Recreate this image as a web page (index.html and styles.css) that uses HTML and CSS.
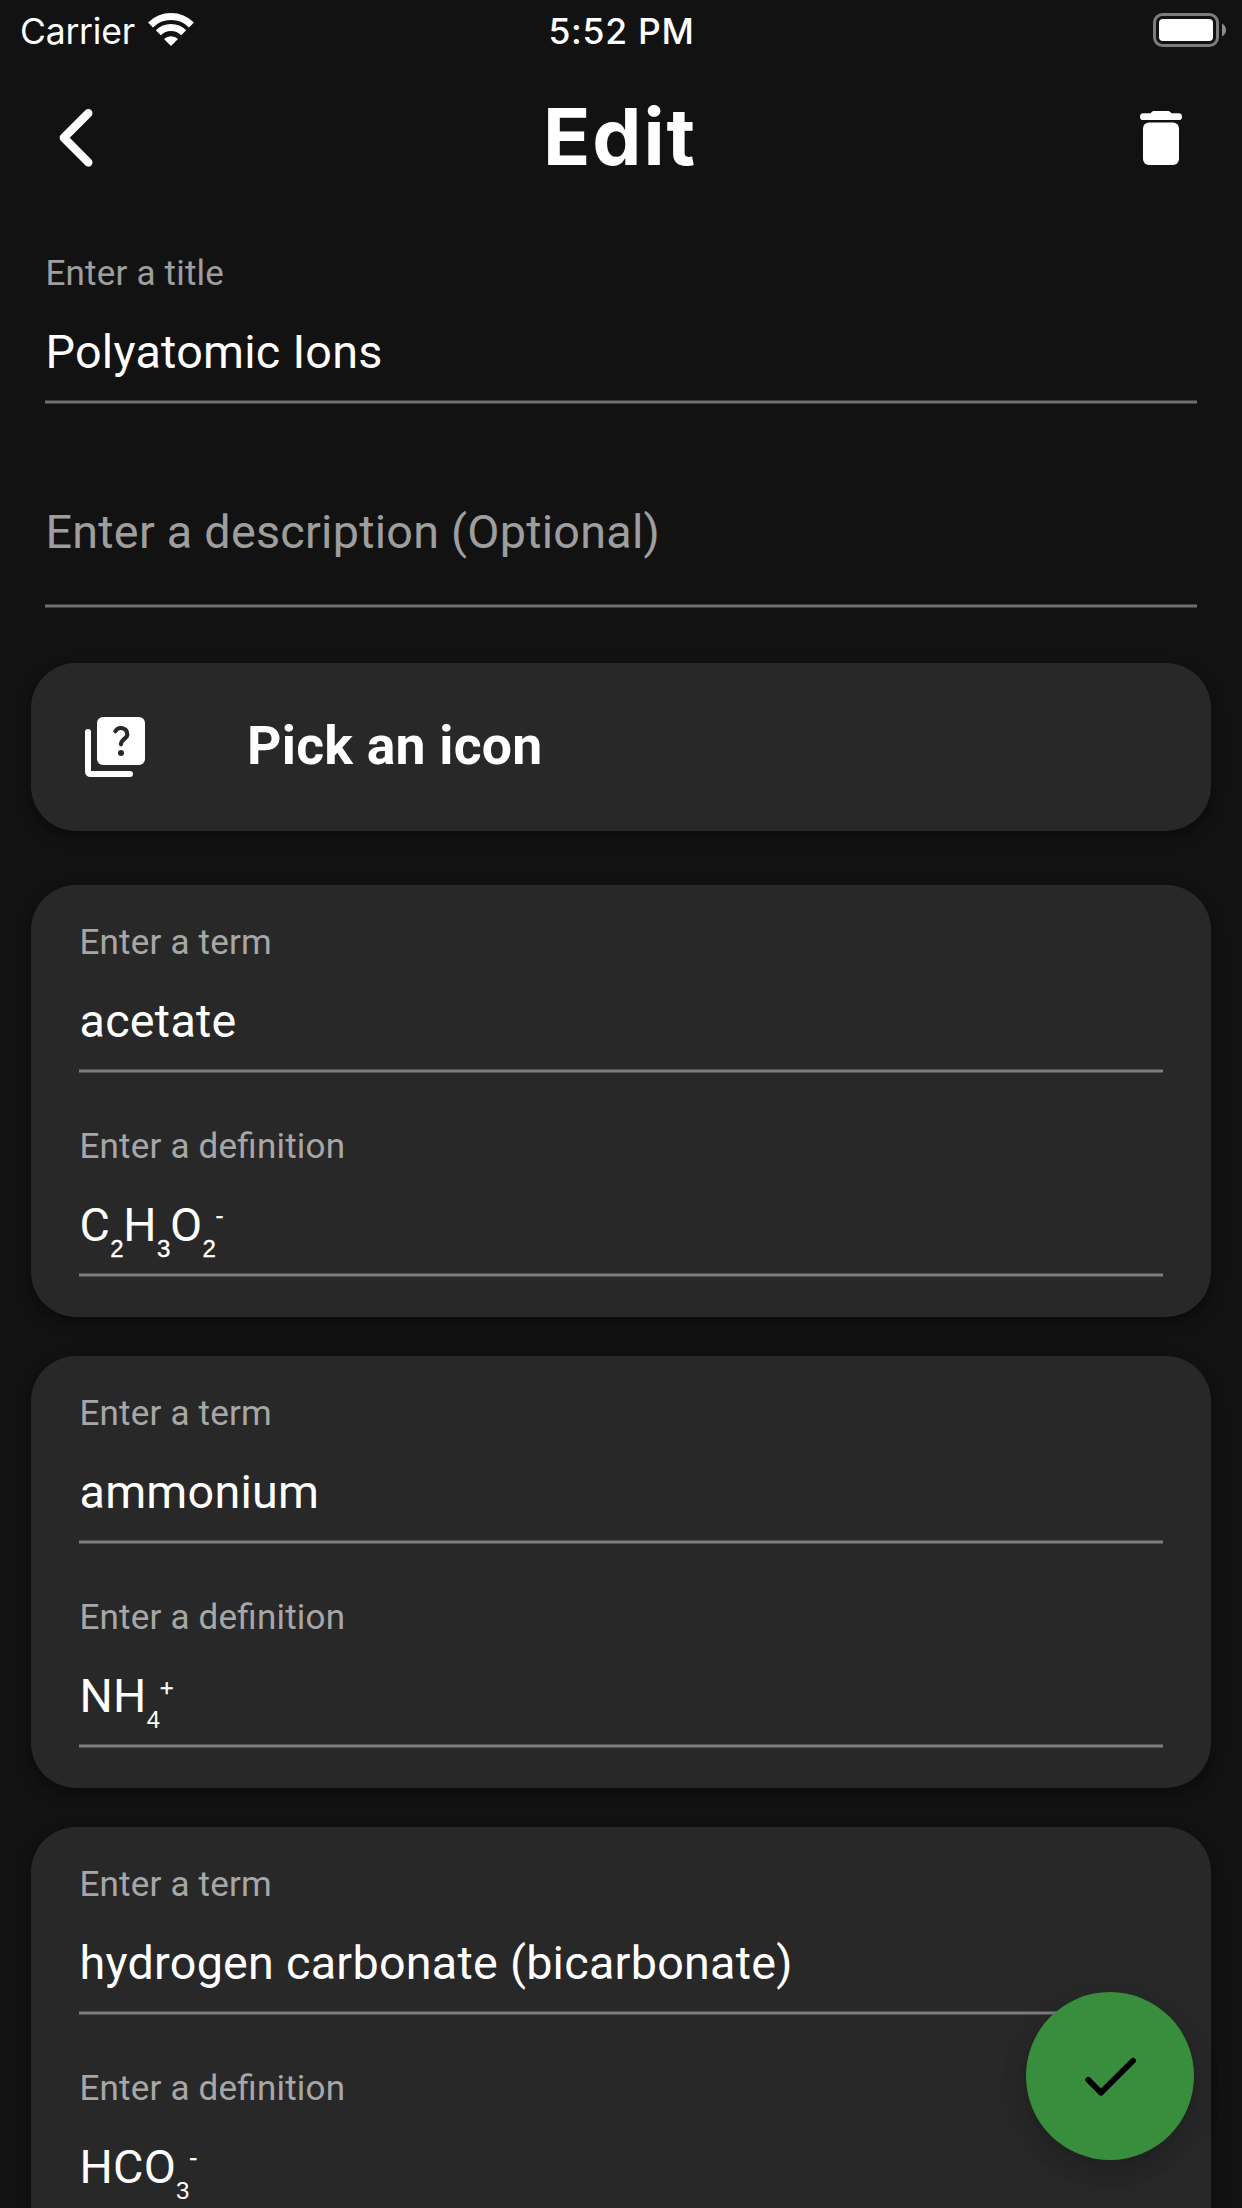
FILE: index.html
```html
<!DOCTYPE html>
<html lang="en">
<head>
<meta charset="utf-8">
<title>Edit</title>
<link rel="stylesheet" href="styles.css">
</head>
<body>
<div class="screen">
  <div class="status">
    <div class="status-left">
      <span class="carrier">Carrier</span>
      <svg class="wifi" width="46" height="34" viewBox="149 13 46 34" fill="none" stroke="#fff" stroke-width="7">
        <path d="M151.5 25A29 29 0 0 1 192.5 25"/>
        <path d="M159.3 32.8A18 18 0 0 1 184.7 32.8"/>
        <path d="M172 46L165 39A10 10 0 0 1 179 39Z" fill="#fff" stroke="none"/>
      </svg>
    </div>
    <span class="clock">5:52 PM</span>
    <svg class="battery" width="74" height="34" viewBox="1153 13 74 34">
      <rect x="1154.5" y="14.5" width="63" height="31" rx="8" fill="none" stroke="#7c7c7c" stroke-width="3"/>
      <rect x="1159" y="19" width="54" height="22" rx="4" fill="#fff"/>
      <path d="M1222 23.5C1227.3 26 1227.3 34 1222 36.5Z" fill="#8c8c8c"/>
    </svg>
  </div>
  <header class="header">
    <svg class="back" width="36" height="60" viewBox="58 108 36 60" fill="none" stroke="#fff" stroke-width="8.4" stroke-linecap="round" stroke-linejoin="round">
      <path d="M88.3 113.2L63.8 137.7L88.3 162.4"/>
    </svg>
    <h1 class="title">Edit</h1>
    <svg class="trash" width="42" height="54" viewBox="1140 111 42 54" fill="#fff">
      <path d="M1143.2 113.3H1150.5L1151.7 112Q1152.6 111 1154 111H1168Q1169.4 111 1170.3 112L1171.5 113.3H1178.8A3.2 3.35 0 0 1 1178.8 120H1143.2A3.2 3.35 0 0 1 1143.2 113.3Z"/>
      <rect x="1143" y="122.6" width="36" height="42.4" rx="6"/>
    </svg>
  </header>

  <main>
    <section class="details">
      <div class="field">
        <div class="label">Enter a title</div>
        <div class="value">Polyatomic Ions</div>
        <div class="line"></div>
      </div>
      <div class="field field-empty">
        <div class="value placeholder">Enter a description (Optional)</div>
        <div class="line"></div>
      </div>
    </section>

    <div class="card picker">
      <svg width="60" height="60" viewBox="85 717 60 60" fill="none" stroke-linecap="round" stroke-linejoin="round">
        <path d="M85 732A3 3 0 0 1 91 732V771H130A3 3 0 0 1 130 777H91Q85 777 85 771Z" fill="#fff"/>
        <rect x="97" y="717" width="48" height="48" rx="6" fill="#fff"/>
        <path d="M115.4 731.2A6.4 6.4 0 0 1 127.3 734.4C127.3 738.6 121 739.4 121 744.3" stroke="#282828" stroke-width="4.2"/>
        <circle cx="121" cy="753" r="3" fill="#282828"/>
      </svg>
      <span class="picker-text">Pick an icon</span>
    </div>

    <div class="terms">
      <article class="card term">
        <div class="field">
          <div class="label">Enter a term</div>
          <div class="value">acetate</div>
          <div class="line"></div>
        </div>
        <div class="field">
          <div class="label">Enter a definition</div>
          <div class="value strong-scripts">C<sub>2</sub>H<sub>3</sub>O<sub>2</sub><sup>-</sup></div>
          <div class="line"></div>
        </div>
      </article>
      <article class="card term">
        <div class="field">
          <div class="label">Enter a term</div>
          <div class="value">ammonium</div>
          <div class="line"></div>
        </div>
        <div class="field">
          <div class="label">Enter a definition</div>
          <div class="value">NH<sub>4</sub><sup class="plus">+</sup></div>
          <div class="line"></div>
        </div>
      </article>
      <article class="card term">
        <div class="field">
          <div class="label">Enter a term</div>
          <div class="value">hydrogen carbonate (bicarbonate)</div>
          <div class="line"></div>
        </div>
        <div class="field">
          <div class="label">Enter a definition</div>
          <div class="value">HCO<sub>3</sub><sup>-</sup></div>
          <div class="line"></div>
        </div>
      </article>
    </div>
  </main>

  <div class="fab">
    <svg width="60" height="60" viewBox="1080 2046 60 60" fill="none" stroke="#000" stroke-width="5.8" stroke-linecap="round" stroke-linejoin="round">
      <path d="M1088.3 2079.9L1101 2092.6L1133 2060.8"/>
    </svg>
  </div>
</div>
</body>
</html>
```
FILE: styles.css
```css
* { box-sizing: border-box; }
body {
  margin: 0;
  background: #121212;
  color: #fff;
  font-family: Roboto, "Liberation Sans", sans-serif;
}
svg { display: block; flex: none; }
.screen {
  position: relative;
  width: 1242px;
  height: 2208px;
  overflow: hidden;
}

.status {
  display: grid;
  grid-template-columns: 1fr auto 1fr;
  align-items: start;
  height: 60px;
  padding: 10px 15px 0;
  font: 400 35.5px/43px Inter, sans-serif;
}
.status-left { display: flex; gap: 13px; padding-left: 5px; }
.carrier { letter-spacing: -0.22px; }
.wifi { margin-top: 3px; }
.clock { font-weight: 500; letter-spacing: 0.7px; margin-left: 1px; }
.battery { justify-self: end; margin-top: 3px; }

.header {
  display: grid;
  grid-template-columns: 1fr auto 1fr;
  align-items: center;
  height: 156px;
  padding: 0 60px 0 58px;
}
.title {
  margin: 0 0 2px;
  font: 700 78px/94px Inter, sans-serif;
  letter-spacing: 2px;
}
.trash { justify-self: end; }

.details { padding: 37px 45px 55px; }
.label {
  height: 40px;
  margin-bottom: 32px;
  padding-left: 0.5px;
  font-size: 35px;
  line-height: 42px;
  letter-spacing: 0.2px;
  font-feature-settings: "liga" 1;
  color: rgba(255, 255, 255, 0.6);
}
.value {
  height: 54px;
  margin-bottom: 21px;
  padding-left: 0.5px;
  font-size: 46.7px;
  line-height: 54px;
  letter-spacing: 0.26px;
  white-space: nowrap;
}
.line {
  height: 4px;
  border: solid rgba(255, 255, 255, 0.2);
  border-width: 1px 0;
  background: rgba(255, 255, 255, 0.4);
  background-clip: content-box;
}
.field-empty { padding-top: 101px; }
.field-empty .value { margin-bottom: 45px; }
.placeholder { color: rgba(255, 255, 255, 0.6); }

.card {
  margin: 0 31px;
  border-radius: 45px;
  background: #282828;
  box-shadow: 0 6px 15px rgba(0, 0, 0, 0.28), 0 3px 6px rgba(0, 0, 0, 0.12);
}
.picker {
  display: flex;
  align-items: center;
  gap: 102px;
  height: 168px;
  padding-left: 54px;
  font-size: 53.5px;
}
.picker-text {
  font-weight: 700;
  line-height: 62px;
  letter-spacing: 0.25px;
  padding-bottom: 2px;
}

.terms {
  display: flex;
  flex-direction: column;
  gap: 39px;
  padding-top: 54px;
}
.term {
  display: flex;
  flex-direction: column;
  gap: 53px;
  padding: 37px 48px 40px;
}
sub, sup {
  font-family: "Liberation Sans", Arial, sans-serif;
  font-size: 24px;
  line-height: 0;
  letter-spacing: -0.2px;
}
sub { vertical-align: -16px; }
sup { vertical-align: 18px; }
sup, .strong-scripts sub { -webkit-text-stroke: 0.4px #fff; }
sup.plus { vertical-align: 16px; -webkit-text-stroke: 0.3px #fff; }

.fab {
  position: absolute;
  right: 48px;
  bottom: 48px;
  display: flex;
  align-items: center;
  justify-content: center;
  width: 168px;
  height: 168px;
  border-radius: 50%;
  background: #388e3c;
  box-shadow: 0 18px 30px rgba(0, 0, 0, 0.14), 0 3px 30px rgba(0, 0, 0, 0.08);
}
```
